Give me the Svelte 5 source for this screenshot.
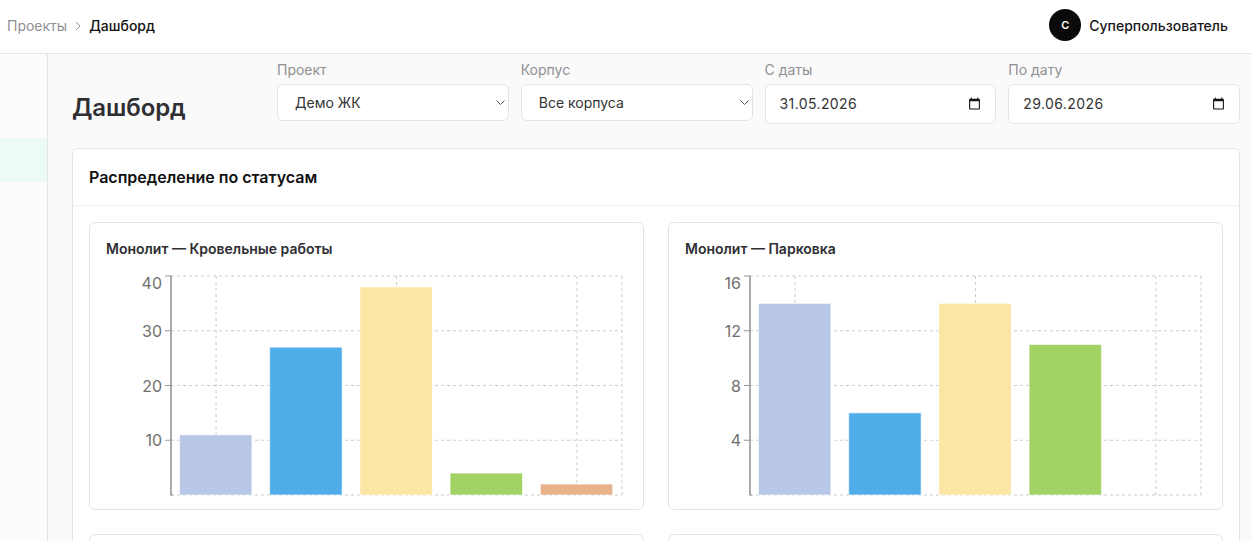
<script>
  const ticksOne = [10, 20, 30, 40];
  const ticksTwo = [4, 8, 12, 16];
  const colors = ['#b8c7e5', '#4fadea', '#fbe6a3', '#a2d164', '#e8b28a'];

  const charts = [
    { title: 'Монолит — Кровельные работы', max: 40, ticks: ticksOne, values: [11, 27, 38, 4, 2] },
    { title: 'Монолит — Парковка', max: 16, ticks: ticksTwo, values: [14, 6, 14, 11, 0] }
  ];

  const left = 65;
  const top = 8;
  const plotW = 451;
  const plotH = 219;
  const band = plotW / 5;
  const barW = 72.4;

  const yOf = (value, max) => top + plotH - (value / max) * plotH;
  const centers = [0, 2, 4].map((i) => left + band * i + band / 2);
</script>

<div class="page">
  <header class="topbar">
    <nav class="crumbs">
      <span class="crumb-link">Проекты</span>
      <svg class="crumb-sep" width="8" height="10" viewBox="0 0 8 10" fill="none">
        <path d="M2 1l4 4-4 4" stroke="#999" stroke-width="1" />
      </svg>
      <span class="crumb-current">Дашборд</span>
    </nav>
    <div class="user">
      <span class="avatar">С</span>
      <span class="user-name">Суперпользователь</span>
    </div>
  </header>

  <div class="body">
    <aside class="sidebar">
      <div class="side-active"></div>
    </aside>

    <main class="main">
      <div class="toolbar">
        <h1>Дашборд</h1>
        <div class="filters">
          <label class="field">
            <span>Проект</span>
            <div class="select-wrap">
              <select>
                <option>Демо ЖК</option>
              </select>
              <svg class="chevron" width="9" height="5" viewBox="0 0 9 5" fill="none">
                <path d="M.5.5l4 4 4-4" stroke="#555" stroke-width="1" />
              </svg>
            </div>
          </label>
          <label class="field">
            <span>Корпус</span>
            <div class="select-wrap">
              <select>
                <option>Все корпуса</option>
              </select>
              <svg class="chevron" width="9" height="5" viewBox="0 0 9 5" fill="none">
                <path d="M.5.5l4 4 4-4" stroke="#555" stroke-width="1" />
              </svg>
            </div>
          </label>
          <label class="field">
            <span>С даты</span>
            <div class="date">
              <input type="text" value="31.05.2026" readonly />
              <svg class="cal" width="13" height="13" viewBox="0 0 24 24">
                <path d="M20 3h-1V1h-2v2H7V1H5v2H4c-1.1 0-2 .9-2 2v16c0 1.1.9 2 2 2h16c1.1 0 2-.9 2-2V5c0-1.1-.9-2-2-2zm0 18H4V8h16v13z" />
              </svg>
            </div>
          </label>
          <label class="field">
            <span>По дату</span>
            <div class="date">
              <input type="text" value="29.06.2026" readonly />
              <svg class="cal" width="13" height="13" viewBox="0 0 24 24">
                <path d="M20 3h-1V1h-2v2H7V1H5v2H4c-1.1 0-2 .9-2 2v16c0 1.1.9 2 2 2h16c1.1 0 2-.9 2-2V5c0-1.1-.9-2-2-2zm0 18H4V8h16v13z" />
              </svg>
            </div>
          </label>
        </div>
      </div>

      <section class="card">
        <div class="card-head">Распределение по статусам</div>
        <div class="grid">
          {#each charts as chart}
            <div class="chart-card">
              <h3>{chart.title}</h3>
              <svg class="chart" width="521" height="228">
                <!-- grid -->
                {#each [0, ...chart.ticks] as t}
                  <line class="grid-line" x1={left} x2={left + plotW} y1={yOf(t, chart.max)} y2={yOf(t, chart.max)} />
                {/each}
                {#each [...centers, left + plotW] as x}
                  <line class="grid-line" x1={x} x2={x} y1={top} y2={top + plotH} />
                {/each}

                <!-- bars -->
                {#each chart.values as value, i}
                  {#if value > 0}
                    <rect
                      class="bar"
                      x={left + band * i + (band - barW) / 2 - 0.4}
                      y={yOf(value, chart.max)}
                      width={barW}
                      height={top + plotH - yOf(value, chart.max)}
                      fill={colors[i]}
                    />
                  {/if}
                {/each}

                <!-- axis -->
                <line class="axis" x1={left} x2={left} y1={top - 0.5} y2={top + plotH} />
                <line class="tick-line" x1={left - 1} x2={left + 2} y1={top + plotH} y2={top + plotH} />
                {#each chart.ticks as t}
                  <line class="tick-line" x1={left - 6} x2={left} y1={yOf(t, chart.max)} y2={yOf(t, chart.max)} />
                  <text
                    class="tick-text"
                    x={left - 9}
                    y={(t === chart.max ? yOf(t, chart.max) + 7 : yOf(t, chart.max)) + 6}
                    text-anchor="end">{t}</text>
                {/each}
              </svg>
            </div>
          {/each}
          <div class="chart-card"></div>
          <div class="chart-card"></div>
        </div>
      </section>
    </main>
  </div>
</div>

<style>
  :global(body) {
    font-family: Inter, 'Noto Sans', sans-serif;
    color: #18181b;
    background: #fafafa;
  }

  .page {
    display: flex;
    flex-direction: column;
    height: 100vh;
    overflow: hidden;
  }

  .topbar {
    flex: none;
    box-sizing: border-box;
    display: flex;
    align-items: center;
    justify-content: space-between;
    height: 54px;
    padding: 0 24px 3px 7px;
    background: #fff;
    border-bottom: 1px solid #e4e4e7;
    font-size: 14px;
  }

  .crumbs {
    display: flex;
    align-items: center;
    gap: 7px;
    margin-top: 1px;
  }

  .crumb-link {
    color: #8f8f95;
  }

  .crumb-current {
    color: #111;
    font-weight: 500;
  }

  .user {
    display: flex;
    align-items: center;
    gap: 8px;
  }

  .avatar {
    display: flex;
    align-items: center;
    justify-content: center;
    width: 32px;
    height: 32px;
    border-radius: 50%;
    background: #0a0a0a;
    color: #fff;
    font-size: 11px;
    font-weight: 600;
  }

  .user-name {
    margin-top: 1px;
    color: #18181b;
    font-weight: 500;
  }

  .body {
    flex: 1;
    display: flex;
    min-height: 0;
  }

  .sidebar {
    flex: none;
    width: 47px;
    padding-top: 84px;
    background: #fcfcfc;
    border-right: 1px solid #e4e4e7;
  }

  .side-active {
    height: 44px;
    background: #ecfbf3;
  }

  .main {
    flex: 1;
    min-width: 0;
    padding: 6px 12px 0 24px;
    background: #fafafa;
  }

  .toolbar {
    display: flex;
    align-items: center;
    justify-content: space-between;
    margin-bottom: 24px;
  }

  h1 {
    margin: 32px 0 0;
    font-size: 24px;
    font-weight: 600;
    line-height: 32px;
    letter-spacing: -0.1px;
    color: #2e2e33;
  }

  .filters {
    display: grid;
    grid-template-columns: repeat(4, 231.75px);
    gap: 12px;
  }

  .field {
    display: flex;
    flex-direction: column;
    gap: 4px;
    font-size: 14px;
    line-height: 20px;
    color: #8f8f95;
  }

  .select-wrap {
    position: relative;
  }

  select {
    display: block;
    box-sizing: border-box;
    width: 100%;
    height: 37px;
    padding: 0 24px 0 17px;
    font: inherit;
    color: #333;
    background-color: #fff;
    border: 1px solid #e4e4e7;
    border-radius: 6px;
    appearance: none;
  }

  .chevron {
    position: absolute;
    top: 16px;
    right: 4px;
    pointer-events: none;
  }

  .date {
    position: relative;
  }

  .date input {
    display: block;
    box-sizing: border-box;
    width: 100%;
    height: 40px;
    padding: 0 14px 1px;
    font: inherit;
    letter-spacing: 0.4px;
    color: #333;
    background: #fff;
    border: 1px solid #e4e4e7;
    border-radius: 6px;
    outline: none;
  }

  .cal {
    position: absolute;
    top: 13px;
    right: 15px;
    fill: #111;
  }

  .card {
    background: #fff;
    border: 1px solid #e4e4e7;
    border-radius: 6px;
  }

  .card-head {
    height: 56px;
    padding: 0 16px;
    display: flex;
    align-items: center;
    border-bottom: 1px solid #f0f0f2;
    font-size: 16px;
    font-weight: 600;
    color: #111;
  }

  .grid {
    display: grid;
    grid-template-columns: minmax(0, 1fr) minmax(0, 1fr);
    gap: 24px;
    padding: 16px;
  }

  .chart-card {
    box-sizing: border-box;
    min-height: 288px;
    padding: 16px 16px 13px;
    background: #fff;
    border: 1px solid #e4e4e7;
    border-radius: 6px;
  }

  h3 {
    margin: 0 0 9px;
    font-size: 14px;
    font-weight: 600;
    line-height: 20px;
    color: #2e2e33;
  }

  .chart {
    display: block;
    overflow: visible;
  }

  .grid-line {
    stroke: #ccc;
    stroke-dasharray: 3 3;
  }

  .bar {
    stroke: #fff;
    stroke-opacity: 0.6;
  }

  .axis {
    stroke: #aaa;
    stroke-width: 2;
  }

  .tick-line {
    stroke: #999;
  }

  .tick-text {
    font-size: 16px;
    fill: #6f6f6f;
  }
</style>
